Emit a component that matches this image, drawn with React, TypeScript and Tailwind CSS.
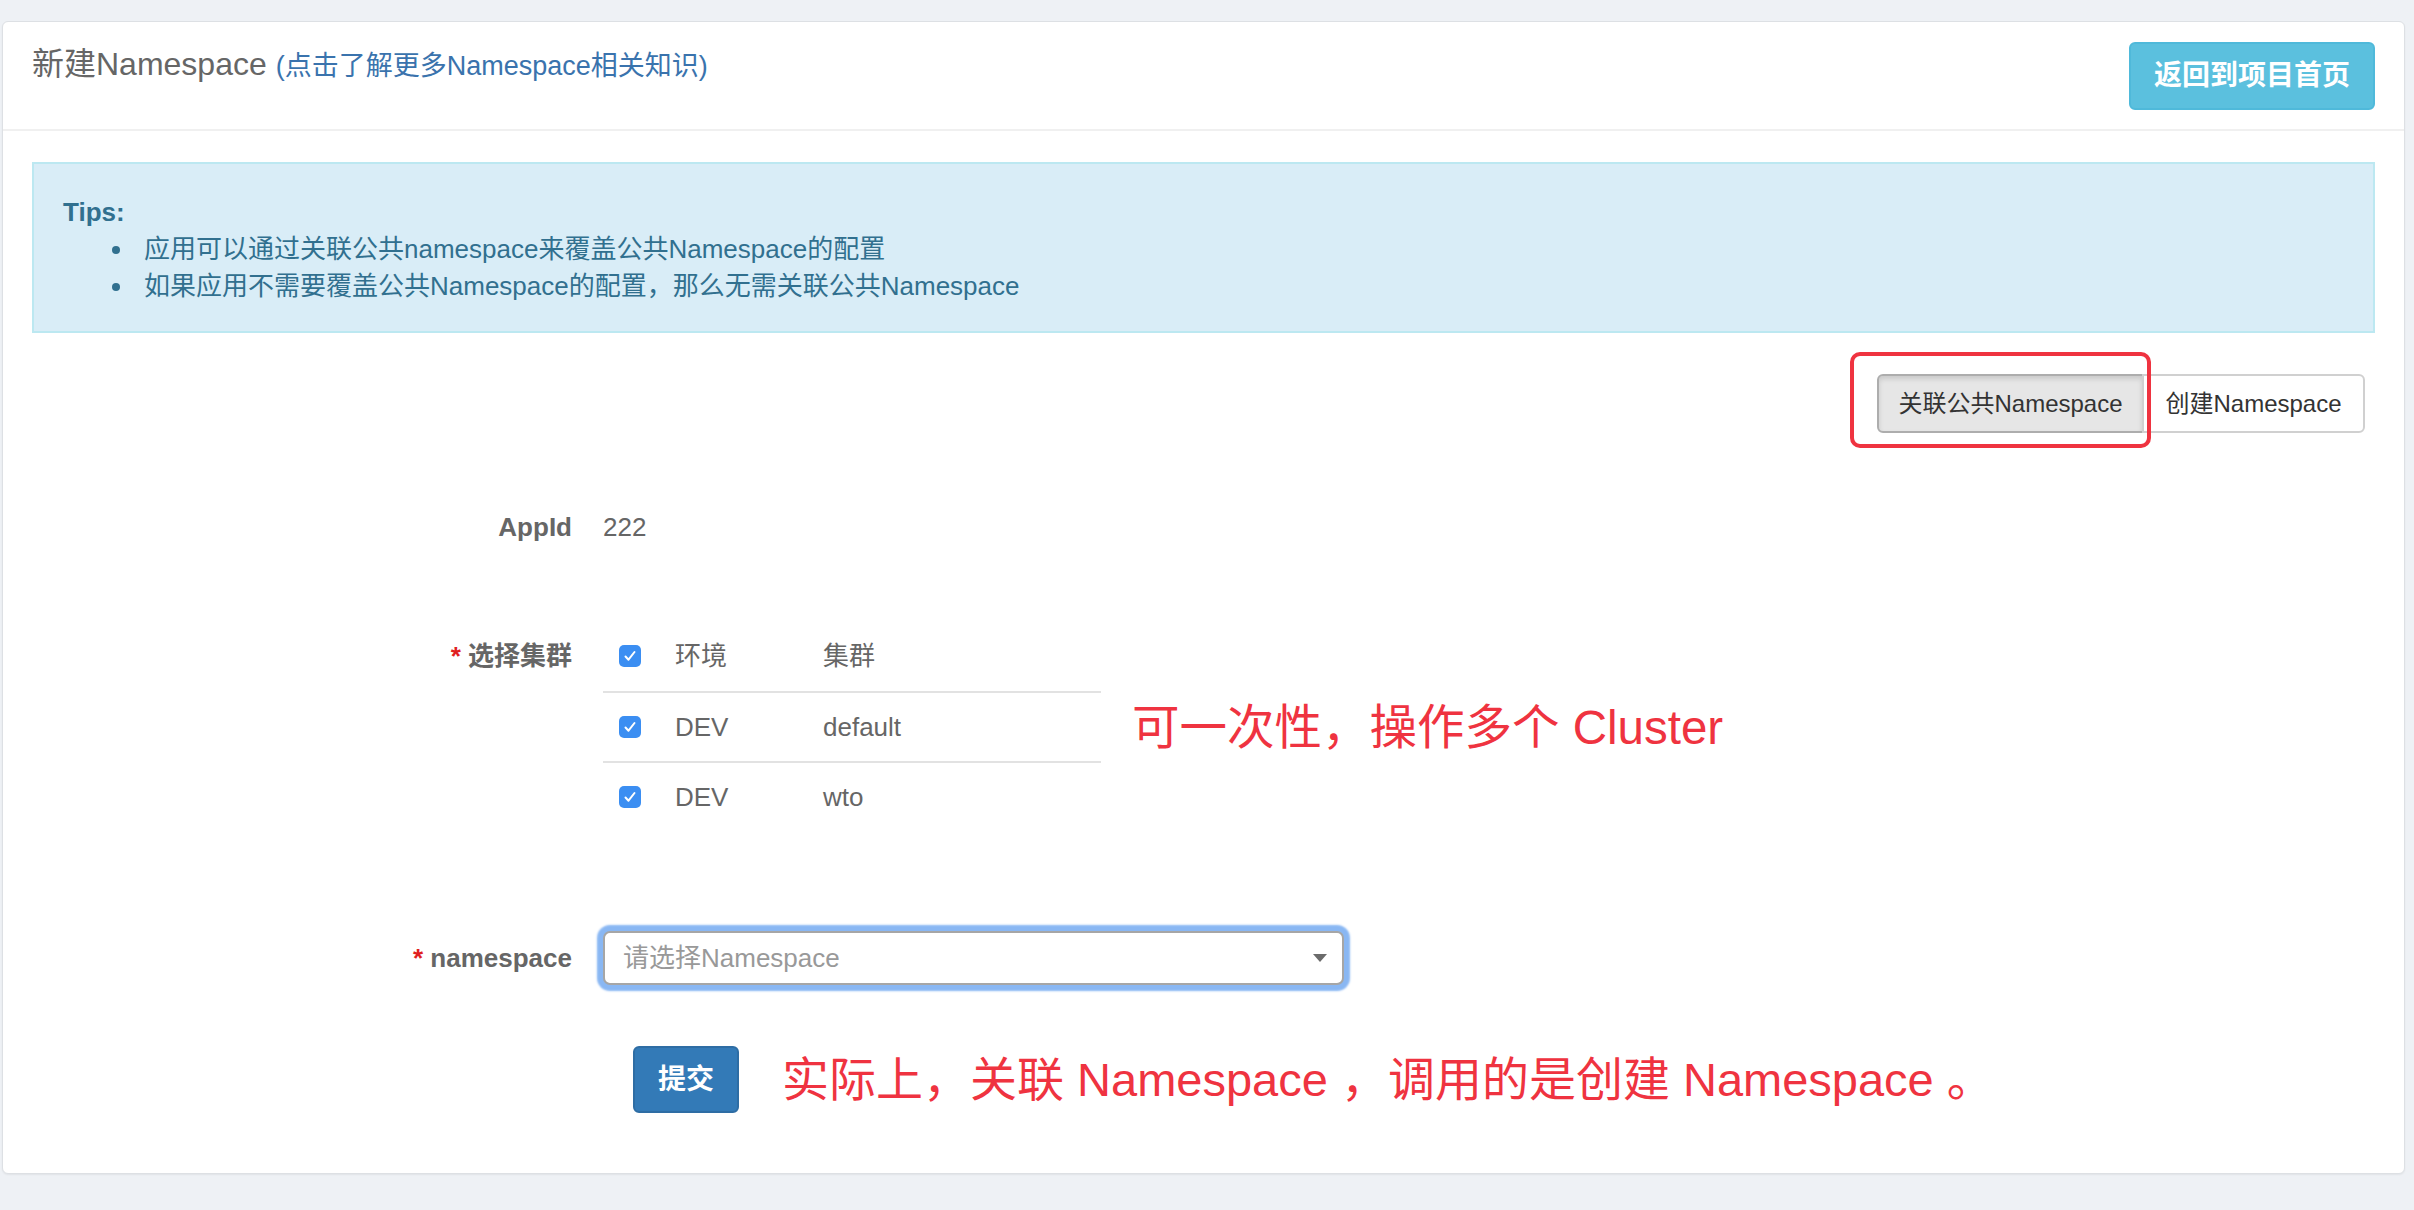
import { useState } from "react";

const rows = [
    { env: "DEV", cluster: "default" },
    { env: "DEV", cluster: "wto" },
];

function Check() {
    return (
        <span className="flex h-[22px] w-[22px] items-center justify-center rounded-[5px] bg-[#3b8ef2]">
            <svg width="16" height="16" viewBox="0 0 16 16" fill="none">
                <path d="M3.5 8.5l3 3.2L12.5 4" stroke="white" strokeWidth="2" strokeLinecap="round" strokeLinejoin="round" />
            </svg>
        </span>
    );
}

export default function App() {
    const [active] = useState("link");

    return (
        <div className="min-h-[1210px] bg-[#eef1f5] pt-[21px] pl-[2px] pr-[9px] font-['Liberation_Sans','Noto_Sans_CJK_SC',sans-serif] text-[26px] text-[#666]">
            <div className="rounded-[6px] border border-[#dde0e4] bg-white shadow-[0_1px_2px_rgba(0,0,0,0.06)]">
                {/* heading */}
                <div className="flex items-start justify-between border-b-2 border-[#f0f0f0] px-[29px] pt-[20px] pb-[19px]">
                    <h3 className="text-[32px] leading-[44px] text-[#666]">
                        新建Namespace{" "}
                        <a className="cursor-pointer text-[27px] text-[#3a73ad]">(点击了解更多Namespace相关知识)</a>
                    </h3>
                    <button
                        type="button"
                        className="h-[68px] w-[246px] rounded-[6px] border-2 border-[#4fb9da] bg-[#5bc0de] text-[28px] font-bold text-white"
                    >
                        返回到项目首页
                    </button>
                </div>

                {/* body */}
                <div className="px-[29px] pt-[31px] pb-[60px]">
                    <div className="border-2 border-[#bce8f1] bg-[#d9edf7] px-[29px] pt-[30px] pb-[26px] leading-[37px] text-[#31708f]">
                        <div className="font-bold">Tips:</div>
                        <ul>
                            <li className="flex items-center">
                                <span className="ml-[49px] mr-[24px] h-[8px] w-[8px] rounded-full bg-[#31708f]" />
                                应用可以通过关联公共namespace来覆盖公共Namespace的配置
                            </li>
                            <li className="flex items-center">
                                <span className="ml-[49px] mr-[24px] h-[8px] w-[8px] rounded-full bg-[#31708f]" />
                                如果应用不需要覆盖公共Namespace的配置，那么无需关联公共Namespace
                            </li>
                        </ul>
                    </div>

                    {/* type switch */}
                    <div className="mt-[41px] flex justify-end pr-[10px]">
                        <div className="relative flex">
                            <button
                                type="button"
                                className={`h-[59px] w-[267px] rounded-l-[6px] border-2 text-[24px] text-[#333] ${
                                    active === "link"
                                        ? "border-[#adadad] bg-[#e6e6e6] shadow-[inset_0_3px_5px_rgba(0,0,0,0.125)]"
                                        : "border-[#ccc] bg-white"
                                }`}
                            >
                                关联公共Namespace
                            </button>
                            <button
                                type="button"
                                className="-ml-[2px] h-[59px] w-[223px] rounded-r-[6px] border-2 border-[#d0d0d0] bg-white text-[24px] text-[#333]"
                            >
                                创建Namespace
                            </button>
                            <div className="pointer-events-none absolute -left-[27px] -top-[22px] h-[96px] w-[301px] rounded-[10px] border-[4px] border-[#ef3340]" />
                        </div>
                    </div>

                    {/* form */}
                    <div className="mt-[74px] grid grid-cols-[540px_1fr] gap-x-[31px]">
                        <label className="text-right font-bold leading-[40px]">AppId</label>
                        <div className="leading-[40px]">222</div>
                    </div>

                    <div className="mt-[74px] grid grid-cols-[540px_1fr] gap-x-[31px]">
                        <label className="text-right font-bold leading-[70px]">
                            <span className="text-[#e0201f]">*</span> 选择集群
                        </label>
                        <div className="flex items-start">
                            <div className="w-[498px]">
                                <div className="flex h-[70px] items-center pl-[16px]">
                                    <Check />
                                    <span className="ml-[34px] w-[148px]">环境</span>
                                    <span>集群</span>
                                </div>
                                {rows.map((r) => (
                                    <div key={r.cluster} className="flex h-[70px] items-center border-t-2 border-[#e2e2e2] pl-[16px]">
                                        <Check />
                                        <span className="ml-[34px] w-[148px]">{r.env}</span>
                                        <span>{r.cluster}</span>
                                    </div>
                                ))}
                            </div>
                            <span className="ml-[31px] mt-[79px] text-[47.5px] leading-[56px] whitespace-nowrap text-[#ef3340]">
                                可一次性，操作多个 Cluster
                            </span>
                        </div>
                    </div>

                    <div className="mt-[100px] grid grid-cols-[540px_1fr] gap-x-[31px]">
                        <label className="text-right font-bold leading-[54px]">
                            <span className="text-[#e0201f]">*</span> namespace
                        </label>
                        <div className="flex h-[54px] w-[741px] items-center justify-between rounded-[7px] border-2 border-[#a6a6a6] bg-white pl-[18px] pr-[14px] text-[#999] shadow-[0_0_2px_6px_rgba(107,165,240,0.8)]">
                            <span>请选择Namespace</span>
                            <svg width="16" height="10" viewBox="0 0 16 10">
                                <path d="M1 1h14L8 9z" fill="#6b6b6b" />
                            </svg>
                        </div>
                    </div>

                    <div className="mt-[61px] grid grid-cols-[540px_1fr] gap-x-[31px]">
                        <div />
                        <div className="ml-[30px] flex items-center">
                            <button
                                type="button"
                                className="h-[67px] w-[106px] rounded-[6px] border-2 border-[#2e6da4] bg-[#337ab7] text-[28px] font-bold text-white"
                            >
                                提交
                            </button>
                            <span className="ml-[43px] text-[47px] leading-[56px] whitespace-nowrap text-[#ef3340]">
                                实际上，关联 Namespace ，调用的是创建 Namespace 。
                            </span>
                        </div>
                    </div>
                </div>
            </div>
        </div>
    );
}
